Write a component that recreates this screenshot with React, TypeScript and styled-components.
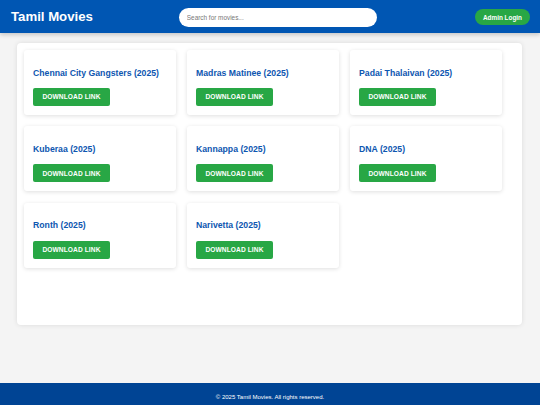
import React from "react";
import styled, { createGlobalStyle } from "styled-components";

const Global = createGlobalStyle`
  html, body { margin: 0; padding: 0; }
  body {
    background: #f4f4f4;
    font-family: "Liberation Sans", Arial, sans-serif;
    overflow: hidden;
  }
  * { box-sizing: border-box; }
`;

const Page = styled.div`
  display: flex;
  flex-direction: column;
  min-height: 100vh;
`;

const Header = styled.header`
  height: 33px;
  background: #0056b3;
  display: flex;
  align-items: center;
  padding: 0 10px 0 11px;
  box-shadow: 0 2px 4px rgba(0, 0, 0, 0.18);
  position: relative;
  z-index: 1;
`;

const Brand = styled.h1`
  margin: 0;
  color: #ffffff;
  font-size: 13.2px;
  font-weight: bold;
  line-height: 1;
  padding-top: 1px;
`;

const Search = styled.input`
  margin-left: 86px;
  width: 198px;
  height: 19px;
  border: none;
  border-radius: 10px;
  padding: 0 8px;
  font-family: "Liberation Sans", Arial, sans-serif;
  font-size: 6.4px;
  color: #333;
  background: #fff;
  outline: none;
  margin-top: 1px;
  &::placeholder { color: #777; }
`;

const AdminButton = styled.button`
  margin-left: auto;
  width: 55px;
  height: 16px;
  border: none;
  border-radius: 8px;
  background: #28a745;
  color: #fff;
  font-family: "Liberation Sans", Arial, sans-serif;
  font-size: 6.4px;
  font-weight: bold;
  padding: 0;
  margin-top: 1px;
`;

const Main = styled.main`
  flex: 1;
  padding: 10px 18px 58px 17px;
`;

const Container = styled.section`
  background: #ffffff;
  border-radius: 4px;
  box-shadow: 0 0 5px rgba(0, 0, 0, 0.1);
  padding: 7px;
  height: 282px;
`;

const Grid = styled.div`
  display: grid;
  grid-template-columns: repeat(3, 152px);
  grid-auto-rows: 65px;
  column-gap: 11px;
  row-gap: 11.3px;
`;

const Card = styled.div`
  display: flex;
  flex-direction: column;
  align-items: flex-start;
  background: #ffffff;
  border-radius: 3px;
  box-shadow: 0 1px 4px rgba(0, 0, 0, 0.13);
  padding: 9px;
`;

const Title = styled.h3`
  margin: 8.8px 0 10.2px;
  font-size: 8.7px;
  font-weight: bold;
  line-height: 10px;
  color: #0d56b0;
  white-space: nowrap;
`;

const Download = styled.a`
  display: flex;
  align-items: center;
  justify-content: center;
  flex: none;
  width: 77px;
  height: 18px;
  background: #28a745;
  border-radius: 2px;
  color: #ffffff;
  font-size: 6.6px;
  font-weight: bold;
  letter-spacing: 0.1px;
  text-decoration: none;
  text-transform: uppercase;
`;

const Footer = styled.footer`
  background: #004494;
  color: #ffffff;
  text-align: center;
  font-size: 6px;
  padding: 10px 0 10px;
  line-height: 8px;
`;

const movies = [
  "Chennai City Gangsters (2025)",
  "Madras Matinee (2025)",
  "Padai Thalaivan (2025)",
  "Kuberaa (2025)",
  "Kannappa (2025)",
  "DNA (2025)",
  "Ronth (2025)",
  "Narivetta (2025)",
];

export default function App() {
  return (
    <Page>
      <Global />
      <Header>
        <Brand>Tamil Movies</Brand>
        <Search placeholder="Search for movies..." />
        <AdminButton>Admin Login</AdminButton>
      </Header>
      <Main>
        <Container>
          <Grid>
            {movies.map((m) => (
              <Card key={m}>
                <Title>{m}</Title>
                <Download href="#">Download Link</Download>
              </Card>
            ))}
          </Grid>
        </Container>
      </Main>
      <Footer>© 2025 Tamil Movies. All rights reserved.</Footer>
    </Page>
  );
}
